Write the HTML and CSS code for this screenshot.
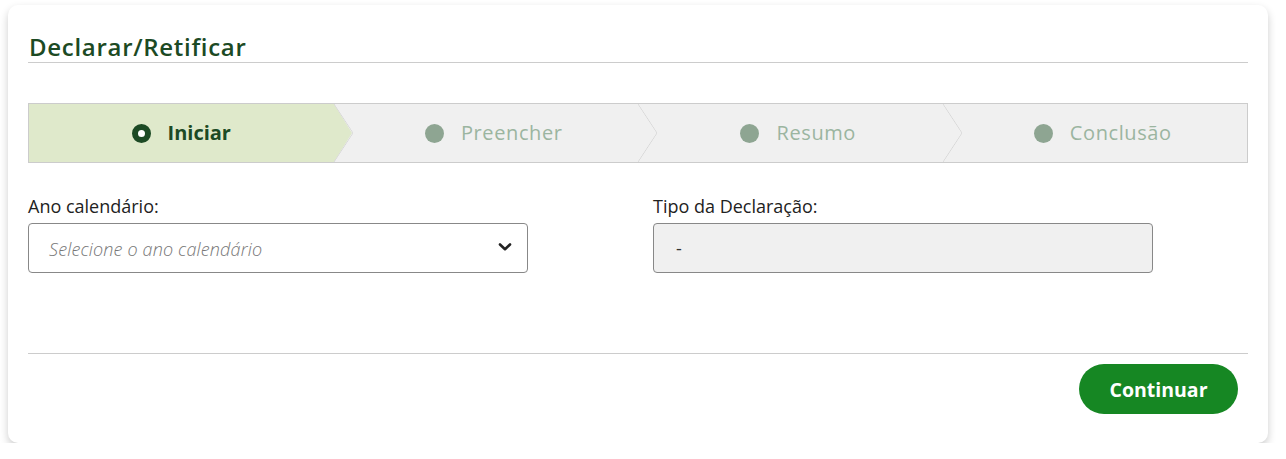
FILE: index.html
```html
<!DOCTYPE html>
<html lang="pt-BR">
<head>
<meta charset="utf-8">
<title>Declarar/Retificar</title>
<link rel="stylesheet" href="styles.css">
</head>
<body>
<div class="card">
  <h1 class="title">Declarar/Retificar</h1>
  <div class="stepper">
    <div class="step active"><span class="ring"></span><span class="label">Iniciar</span></div>
    <div class="step"><span class="dot"></span><span class="label">Preencher</span></div>
    <div class="step"><span class="dot"></span><span class="label">Resumo</span></div>
    <div class="step last"><span class="dot"></span><span class="label">Conclusão</span></div>
  </div>
  <div class="fields">
    <div class="field">
      <label class="flabel">Ano calendário:</label>
      <div class="select">
        <span class="placeholder">Selecione o ano calendário</span>
        <svg class="chev" width="14" height="10" viewBox="0 0 14 10"><path d="M2 2.5 L7 7.2 L12 2.5" fill="none" stroke="#222" stroke-width="2.6" stroke-linecap="round" stroke-linejoin="round"/></svg>
      </div>
    </div>
    <div class="field">
      <label class="flabel">Tipo da Declaração:</label>
      <div class="readonly">-</div>
    </div>
  </div>
  <div class="footer">
    <button class="btn">Continuar</button>
  </div>
</div>
</body>
</html>
```

FILE: styles.css
```css
html, body { margin: 0; padding: 0; background: #ffffff; }
body { font-family: "Open Sans", Lato, sans-serif; }
.card {
  margin: 5px 18px 0 8px;
  height: 438px;
  box-sizing: border-box;
  background: #fff;
  border-radius: 10px;
  box-shadow: 0 4px 9px rgba(0,0,0,0.2);
  padding: 28px 20px 0 20px;
}
.title {
  margin: 0;
  font-size: 24px;
  font-weight: 600;
  letter-spacing: 0.7px;
  color: #1c4a24;
  line-height: 28px;
  padding-left: 1px;
  padding-bottom: 1px;
  border-bottom: 1px solid #cccccc;
}
.stepper {
  margin-top: 40px;
  height: 60px;
  box-sizing: border-box;
  border: 1px solid #cccccc;
  background: #f0f0f0;
  display: flex;
  overflow: hidden;
}
.step {
  width: 25%;
  box-sizing: border-box;
  position: relative;
  display: flex;
  align-items: center;
  justify-content: center;
  gap: 17px;
  font-size: 20px;
  letter-spacing: 0.6px;
  color: #9bb5a0;
  padding-left: 16px;
}
.step.active {
  background: #dfe9cb;
  color: #1c4a24;
  font-weight: 700;
  letter-spacing: 0;
  padding-left: 0;
  z-index: 2;
}
.step.active::after {
  content: "";
  position: absolute;
  right: -18px; top: 0;
  width: 0; height: 0;
  border-top: 29px solid transparent;
  border-bottom: 29px solid transparent;
  border-left: 18px solid #dfe9cb;
}
.step.active::before,
.step:not(.last):not(.active)::after {
  content: "";
  position: absolute;
  right: -19px; top: 0;
  width: 19px; height: 58px;
  background: linear-gradient(to top right, transparent calc(50% - 0.7px), #d8d8d8 50%, transparent calc(50% + 0.7px)) top / 100% 50% no-repeat,
              linear-gradient(to bottom right, transparent calc(50% - 0.7px), #d8d8d8 50%, transparent calc(50% + 0.7px)) bottom / 100% 50% no-repeat;
  z-index: 1;
}
.ring {
  width: 19px; height: 19px;
  box-sizing: border-box;
  border-radius: 50%;
  border: 6px solid #1c4a24;
  background: #fff;
}
.dot {
  width: 19px; height: 19px;
  border-radius: 50%;
  background: #8ea592;
}
.label { line-height: 24px; }
.fields {
  display: grid;
  grid-template-columns: 500px 500px;
  column-gap: 125px;
  margin-top: 32px;
}
.flabel {
  display: block;
  font-size: 18px;
  color: #222;
  line-height: 22px;
  margin-bottom: 6px;
}
.select, .readonly {
  height: 50px;
  box-sizing: border-box;
  border: 1px solid #888;
  border-radius: 4px;
  display: flex;
  align-items: center;
}
.select { padding: 0 15px 0 20px; justify-content: space-between; }
.placeholder { font-style: italic; color: #777; font-size: 18px; font-weight: 300; margin-top: 2px; letter-spacing: 0.15px; }
.chev { margin-top: -2px; }
.readonly { background: #f0f0f0; padding-left: 22px; font-size: 18px; color: #333; }
.footer {
  margin-top: 80px;
  border-top: 1px solid #cccccc;
  display: flex;
  justify-content: flex-end;
  padding-top: 10px;
  padding-right: 10px;
}
.btn {
  width: 159px; height: 50px;
  border: none;
  border-radius: 25px;
  background: #168723;
  color: #fff;
  font-family: inherit;
  font-size: 19.5px;
  font-weight: 700;
  padding-top: 2px;
}
```
